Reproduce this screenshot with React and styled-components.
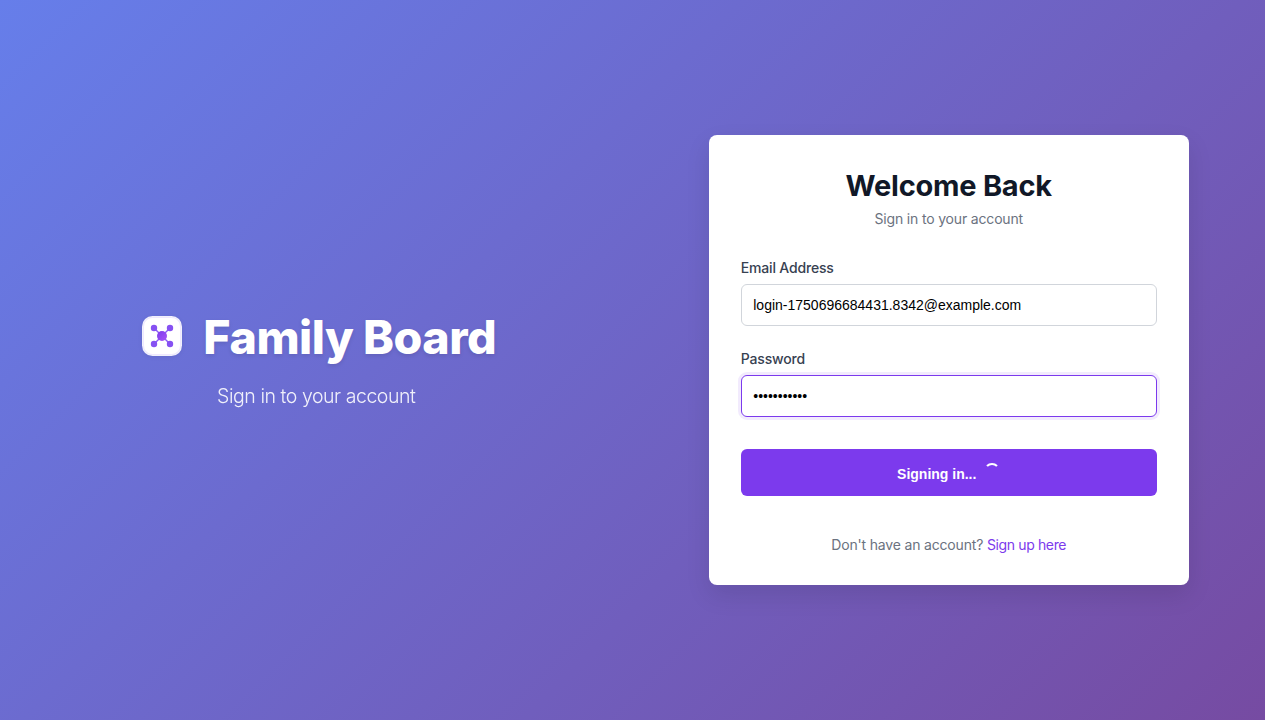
import React from "react";
import styled, { createGlobalStyle } from "styled-components";

const GlobalStyle = createGlobalStyle`
  *, *::before, *::after { box-sizing: border-box; }
  body {
    margin: 0;
    background: #fff;
    overflow: hidden;
    font-family: Inter, "Liberation Sans", sans-serif;
    -webkit-font-smoothing: antialiased;
  }
  h1, h2, p { margin: 0; }
`;

const Page = styled.main`
  display: grid;
  grid-template-columns: 1fr 1fr;
  align-items: center;
  justify-items: center;
  width: 1265px;
  height: 720px;
  background: linear-gradient(135deg, #667eea 0%, #764ba2 100%);
`;

const Brand = styled.section`
  display: flex;
  flex-direction: column;
  align-items: center;
  color: #fff;
`;

const BrandRow = styled.div`
  display: flex;
  align-items: center;
  gap: 17px;
  margin-bottom: 15px;
  padding-left: 2px;
`;

const LogoMark = styled.svg`
  width: 48px;
  height: 48px;
  display: block;
  margin-bottom: 2px;
  filter: drop-shadow(0 1px 2px rgba(0, 0, 0, 0.06));
`;

const BrandName = styled.h1`
  padding: 1px 0;
  font-size: 46.6px;
  line-height: 57px;
  font-weight: 800;
  letter-spacing: -0.5px;
  text-shadow: 0 2px 4px rgba(0, 0, 0, 0.1);
`;

const Tagline = styled.p`
  margin: -2px 0 1px;
  font-size: 19.5px;
  line-height: 32px;
  font-weight: 300;
  letter-spacing: -0.45px;
  opacity: 0.9;
`;

const Card = styled.section`
  width: 480px;
  height: 450px;
  padding: 32px;
  border-radius: 8px;
  background: #fff;
  box-shadow: 0 10px 25px rgba(0, 0, 0, 0.1);
`;

const CardHeader = styled.header`
  text-align: center;
  margin-bottom: 30px;
`;

const Title = styled.h2`
  font-size: 29px;
  line-height: 37px;
  font-weight: 700;
  letter-spacing: -0.24px;
  color: #111827;
  margin-bottom: 4px;
`;

const Subtitle = styled.p`
  font-size: 14px;
  line-height: 21px;
  letter-spacing: -0.17px;
  color: #6b7280;
`;

const Field = styled.div`
  display: flex;
  flex-direction: column;
  gap: 8px;
  margin-bottom: ${(p) => (p.$last ? 32 : 24)}px;
`;

const Label = styled.label`
  font-size: 14px;
  line-height: 17px;
  font-weight: 500;
  letter-spacing: -0.17px;
  color: #374151;
`;

const Input = styled.input`
  height: 42px;
  padding: 0 12px 0 11.5px;
  border: 1px solid ${(p) => (p.$active ? "#7c3aed" : "#d1d5db")};
  border-radius: 6px;
  outline: none;
  background: #fff;
  color: #000;
  font: 14px "Liberation Sans", Arial, sans-serif;
  box-shadow: ${(p) => (p.$active ? "0 0 0 3px rgba(124, 58, 237, 0.1)" : "none")};
`;

const SubmitButton = styled.button`
  display: flex;
  align-items: center;
  justify-content: center;
  gap: 8px;
  width: 100%;
  height: 47px;
  padding: 2px 0 0;
  border: 0;
  border-radius: 6px;
  background: #7c3aed;
  color: #fff;
  font: 600 14px "Liberation Sans", Arial, sans-serif;
`;

const Spinner = styled.span`
  width: 16px;
  height: 16px;
  margin-top: -6px;
  border: 2px solid transparent;
  border-top-color: currentColor;
  border-radius: 50%;
`;

const Footer = styled.p`
  margin-top: 38px;
  text-align: center;
  font-size: 14px;
  line-height: 21px;
  letter-spacing: -0.18px;
  color: #6b7280;
`;

const SignUpLink = styled.a`
  color: #7c3aed;
  letter-spacing: -0.36px;
  text-decoration: none;
`;

const nodes = [[8, 8], [24, 8], [8, 24], [24, 24]];

function Logo() {
  return (
    <LogoMark viewBox="0 0 48 48" aria-hidden="true">
      <defs>
        <linearGradient id="mark" x1="0" y1="0" x2="1" y2="1">
          <stop offset="0" stopColor="#7c3aed" />
          <stop offset="1" stopColor="#a855f7" />
        </linearGradient>
      </defs>
      <rect x="4" y="4" width="40" height="40" rx="10.5" fill="#fff" fillOpacity="0.9" />
      <rect x="5.5" y="5.5" width="37" height="37" rx="9" fill="#fff" stroke="#e9ddff" strokeWidth="0.6" />
      <g transform="translate(8 8)">
        {nodes.map(([x, y]) => (
          <React.Fragment key={`${x}-${y}`}>
            <line x1={x} y1={y} x2="16" y2="16" stroke="#8b5cf6" strokeWidth="1.5" />
            <circle cx={x} cy={y} r="3.2" fill="#8651f2" />
          </React.Fragment>
        ))}
        <circle cx="16" cy="16" r="5" fill="url(#mark)" />
      </g>
    </LogoMark>
  );
}

export default function App() {
  return (
    <>
      <GlobalStyle />
      <Page>
        <Brand>
          <BrandRow>
            <Logo />
            <BrandName>Family Board</BrandName>
          </BrandRow>
          <Tagline>Sign in to your account</Tagline>
        </Brand>
        <Card>
          <CardHeader>
            <Title>Welcome Back</Title>
            <Subtitle>Sign in to your account</Subtitle>
          </CardHeader>
          <Field>
            <Label htmlFor="email">Email Address</Label>
            <Input id="email" type="email" defaultValue="login-1750696684431.8342@example.com" />
          </Field>
          <Field $last>
            <Label htmlFor="password">Password</Label>
            <Input id="password" type="password" defaultValue="password123" $active />
          </Field>
          <SubmitButton type="button">
            Signing in...
            <Spinner />
          </SubmitButton>
          <Footer>
            Don't have an account? <SignUpLink>Sign up here</SignUpLink>
          </Footer>
        </Card>
      </Page>
    </>
  );
}
